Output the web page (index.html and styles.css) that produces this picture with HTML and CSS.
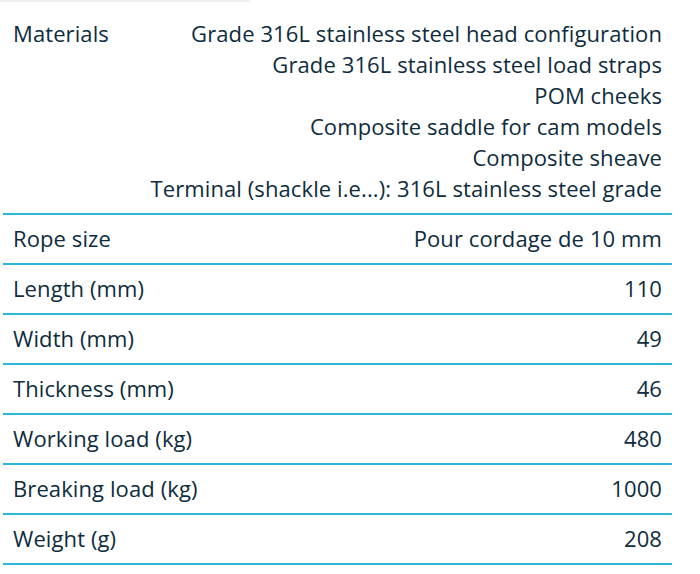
FILE: index.html
```html
<!DOCTYPE html>
<html>
<head>
<meta charset="utf-8">
<link rel="stylesheet" href="styles.css">
</head>
<body>
<div class="topbar"></div>
<div class="specs">
  <div class="row first">
    <div class="label">Materials</div>
    <div class="value">
      <span class="line">Grade 316L stainless steel head configuration</span>
      <span class="line">Grade 316L stainless steel load straps</span>
      <span class="line">POM cheeks</span>
      <span class="line">Composite saddle for cam models</span>
      <span class="line">Composite sheave</span>
      <span class="line">Terminal (shackle i.e...): 316L stainless steel grade</span>
    </div>
  </div>
  <div class="row"><div class="label">Rope size</div><div class="value">Pour cordage de 10 mm</div></div>
  <div class="row"><div class="label">Length (mm)</div><div class="value">110</div></div>
  <div class="row"><div class="label">Width (mm)</div><div class="value">49</div></div>
  <div class="row"><div class="label">Thickness (mm)</div><div class="value">46</div></div>
  <div class="row"><div class="label">Working load (kg)</div><div class="value">480</div></div>
  <div class="row"><div class="label">Breaking load (kg)</div><div class="value">1000</div></div>
  <div class="row"><div class="label">Weight (g)</div><div class="value">208</div></div>
</div>
</body>
</html>
```
FILE: styles.css
```css
html, body {
  margin: 0;
  padding: 0;
  background: #ffffff;
}
body {
  font-family: "Open Sans", "Noto Sans", sans-serif;
  color: #0e2c3d;
}
.topbar {
  width: 250px;
  height: 2px;
  background: #eeeeee;
}
.specs {
  margin: 7px 0 0 3px;
  width: 669px;
  font-size: 22px;
  line-height: 31px;
  letter-spacing: 0.1px;
}
.row {
  display: flex;
  justify-content: space-between;
  align-items: flex-start;
  gap: 20px;
  padding: 8px 10px 9px 10px;
  border-bottom: 2px solid #2bb8d9;
}
.row.first {
  padding-top: 9px;
  padding-bottom: 9px;
}
.label {
  white-space: nowrap;
  flex: none;
}
.value {
  text-align: right;
  white-space: nowrap;
}
.line {
  display: block;
}
```
